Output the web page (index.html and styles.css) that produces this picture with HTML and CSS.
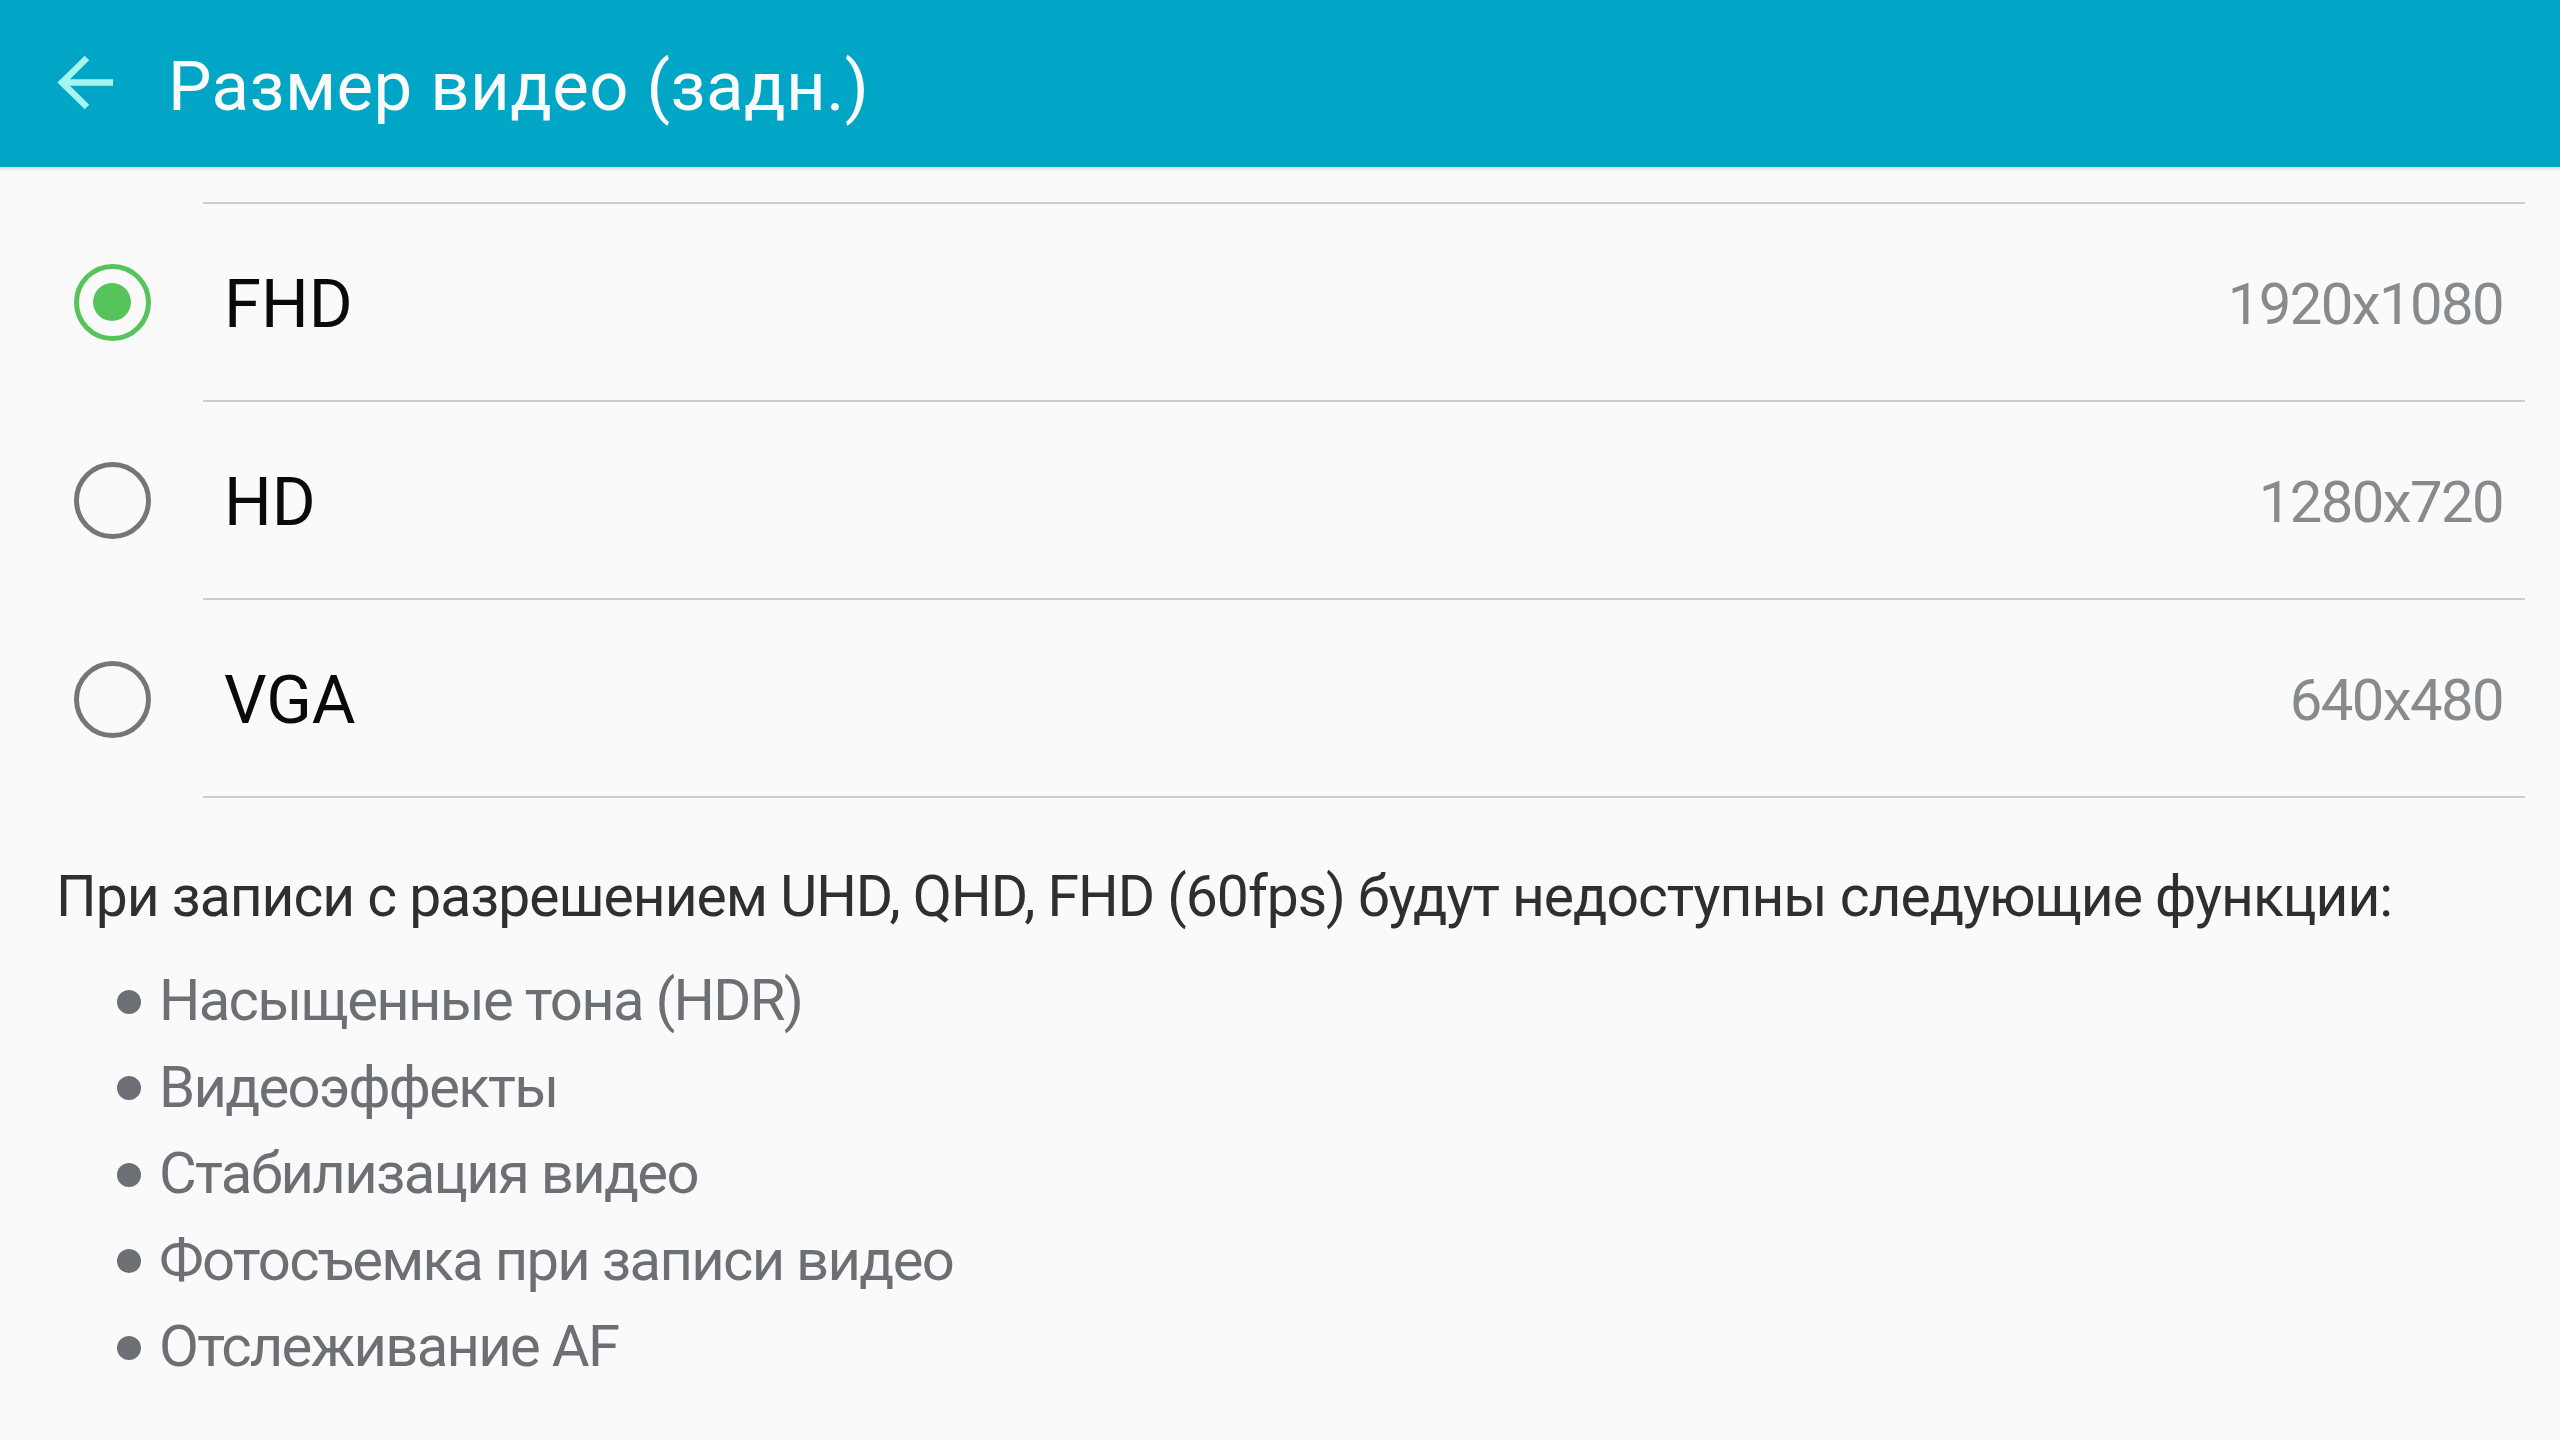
FILE: index.html
```html
<!DOCTYPE html>
<html lang="ru">
<head>
<meta charset="utf-8">
<title>Размер видео (задн.)</title>
<link rel="stylesheet" href="styles.css">
</head>
<body>
<header class="appbar">
  <svg class="back" viewBox="0 0 56 56" width="56" height="56" aria-hidden="true">
    <path d="M30 3 L5 27.5 L30 52 M5 27.5 H56" fill="none" stroke="#a4f6ef" stroke-width="6.5" stroke-linecap="butt" stroke-linejoin="miter"/>
  </svg>
  <h1 class="title">Размер видео (задн.)</h1>
</header>

<main class="content">
  <ul class="options">
    <li class="option">
      <span class="radio-cell"><span class="radio radio-on"><span class="radio-dot"></span></span></span>
      <span class="option-main">
        <span class="option-label">FHD</span>
        <span class="option-value">1920x1080</span>
      </span>
    </li>
    <li class="option">
      <span class="radio-cell"><span class="radio"></span></span>
      <span class="option-main">
        <span class="option-label">HD</span>
        <span class="option-value">1280x720</span>
      </span>
    </li>
    <li class="option option-last">
      <span class="radio-cell"><span class="radio"></span></span>
      <span class="option-main">
        <span class="option-label">VGA</span>
        <span class="option-value">640x480</span>
      </span>
    </li>
  </ul>

  <section class="note">
    <p class="note-text">При записи с разрешением UHD, QHD, FHD (60fps) будут недоступны следующие функции:</p>
    <ul class="note-list">
      <li class="note-item"><span class="dot"></span>Насыщенные тона (HDR)</li>
      <li class="note-item"><span class="dot"></span>Видеоэффекты</li>
      <li class="note-item"><span class="dot"></span>Стабилизация видео</li>
      <li class="note-item"><span class="dot"></span>Фотосъемка при записи видео</li>
      <li class="note-item"><span class="dot"></span>Отслеживание AF</li>
    </ul>
  </section>
</main>
</body>
</html>
```

FILE: styles.css
```css
* { box-sizing: border-box; }

html, body {
  margin: 0;
  padding: 0;
  background: #fafafa;
  font-family: Roboto, "Noto Sans", "Liberation Sans", sans-serif;
  width: 2560px;
  height: 1440px;
  overflow: hidden;
}

.appbar {
  height: 167px;
  background: #01a5c5;
  display: flex;
  align-items: center;
  box-shadow: 0 2px 3px rgba(0, 0, 0, 0.14);
  position: relative;
  z-index: 1;
}

.back {
  margin-left: 57px;
  flex: none;
  margin-top: -1px;
}

.title {
  margin: 0 0 0 55px;
  padding-top: 6px;
  font-size: 69px;
  line-height: 1;
  font-weight: 400;
  letter-spacing: 0.4px;
  color: #fbfbfb;
}

.content {
  padding-top: 35px;
}

.options {
  list-style: none;
  margin: 0;
  padding: 0 35px 0 0;
}

.option {
  display: flex;
  height: 198px;
}

.radio-cell {
  width: 203px;
  flex: none;
  display: flex;
  align-items: center;
  justify-content: center;
  padding-left: 21px;
  padding-top: 2px;
}

.radio {
  width: 77px;
  height: 77px;
  border-radius: 50%;
  border: 5.5px solid #767676;
  display: flex;
  align-items: center;
  justify-content: center;
}

.radio-on {
  border-color: #56c45b;
}

.radio-dot {
  width: 38px;
  height: 38px;
  border-radius: 50%;
  background: #56c45b;
}

.option-main {
  flex: 1;
  display: flex;
  align-items: center;
  justify-content: space-between;
  border-top: 2px solid #cdcdcd;
  padding: 4px 22px 0 21px;
}

.option-last .option-main {
  border-bottom: 2px solid #cdcdcd;
}

.option-last {
  height: 200px;
}

.option-label {
  font-size: 67px;
  line-height: 1;
  color: #0a0a0a;
}

.option-value {
  font-size: 58px;
  line-height: 1;
  letter-spacing: -1.6px;
  color: #878b8e;
}

.note {
  padding: 70px 0 0 56px;
}

.note-text {
  margin: 0;
  font-size: 57px;
  line-height: 57px;
  letter-spacing: -1px;
  color: #2f2f2f;
}

.note-list {
  list-style: none;
  margin: 32px 0 0 0;
  padding: 0 0 0 61px;
}

.note-item {
  display: flex;
  align-items: center;
  height: 86.5px;
  font-size: 58px;
  letter-spacing: -1.7px;
  color: #6c7074;
}

.dot {
  width: 24px;
  height: 24px;
  border-radius: 50%;
  background: #6c7074;
  margin: 3px 18px 0 0;
  flex: none;
}
```
